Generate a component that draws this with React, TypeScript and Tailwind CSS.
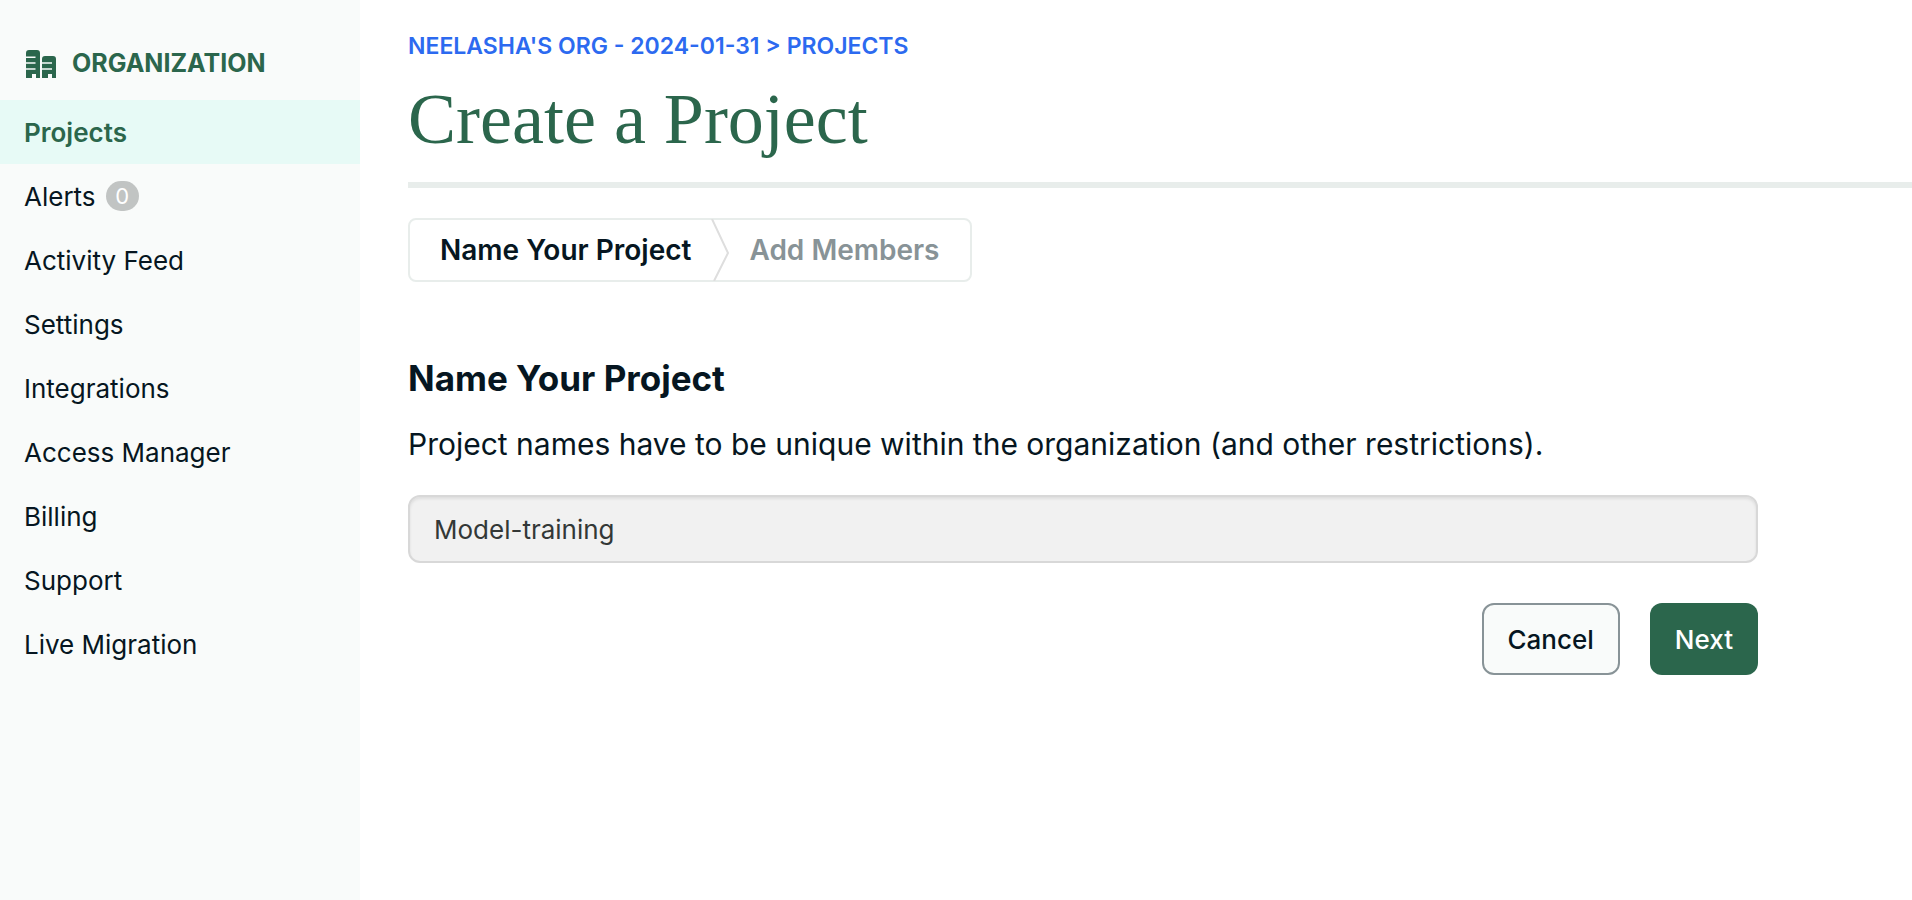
const navItems = [
  { label: "Projects", active: true },
  { label: "Alerts", count: 0 },
  { label: "Activity Feed" },
  { label: "Settings" },
  { label: "Integrations" },
  { label: "Access Manager" },
  { label: "Billing" },
  { label: "Support" },
  { label: "Live Migration" },
];

function BuildingIcon() {
  return (
    <svg className="h-7 w-[30px] shrink-0" viewBox="0 0 30 28" fill="currentColor" aria-hidden="true">
      <path d="M0 28V3Q0 0 3 0H11Q14 0 14 3V28H10V24H6V28Z" />
      <path d="M16 28V9Q16 6 19 6H27Q30 6 30 9V28H26V24H22V28Z" />
      <path
        d="M0 6.500H9.500V8H0ZM0 12.300H9.500V13.800H0ZM0 18.200H9.500V19.800H0ZM16 12.300H26V13.800H16ZM16 18.200H26V19.800H16Z"
        fill="#f9fbfa"
      />
    </svg>
  );
}

function Sidebar() {
  return (
    <aside className="w-[360px] shrink-0 bg-[#f9fbfa] pt-7">
      <h2 className="flex h-[72px] items-center gap-4 px-[26px] text-[25px] font-bold text-[#2b664c]">
        <BuildingIcon />
        ORGANIZATION
      </h2>
      <nav aria-label="Organization">
        <ul>
          {navItems.map((item) => (
            <li key={item.label}>
              <a
                href="#"
                aria-current={item.active ? "page" : undefined}
                className={
                  item.active
                    ? "flex h-16 items-center bg-[#e7faf6] px-6 text-[26px] font-semibold text-[#2b664c]"
                    : "flex h-16 items-center gap-[10px] px-6 text-[26px] text-[#061621]"
                }
              >
                {item.label}
                {item.count !== undefined && (
                  <span className="flex h-[30px] w-[33px] items-center justify-center rounded-full bg-[#c1c4c3] text-[22px] text-white">
                    {item.count}
                  </span>
                )}
              </a>
            </li>
          ))}
        </ul>
      </nav>
    </aside>
  );
}

function Steps() {
  return (
    <ol className="flex h-16 w-fit items-stretch rounded-lg border-2 border-[#e8edeb] text-[28px] font-semibold">
      <li aria-current="step" className="flex items-center pl-[30px] text-[#061621]">
        Name Your Project
      </li>
      <li className="flex items-center pr-[30px] text-[#889397]">
        <svg className="mx-5 h-[62px] w-[18px] shrink-0" viewBox="0 0 18 62" fill="none" aria-hidden="true">
          <path d="M1 0L17 34L3 62" stroke="#dedede" strokeWidth="2" />
        </svg>
        Add Members
      </li>
    </ol>
  );
}

export default function App() {
  return (
    <div className="flex min-h-screen bg-white font-['Inter','Liberation_Sans',sans-serif] text-[#061621]">
      <Sidebar />
      <main className="min-w-0 grow pt-7 pl-12">
        <header className="border-b-6 border-[#e8edeb] pb-5">
          <a href="#" className="block w-fit text-[23px] leading-9 font-semibold text-[#2c6af0]">
            NEELASHA'S ORG - 2024-01-31 &gt; PROJECTS
          </a>
          <h1 className="pt-3 font-['Liberation_Serif',serif] text-[72px] leading-[86px] text-[#2b664c]">
            Create a Project
          </h1>
        </header>
        <div className="max-w-[1504px] pt-[30px] pr-[154px]">
          <Steps />
          <form className="pt-[72px]" onSubmit={(event) => event.preventDefault()}>
            <h2 className="text-[35px] leading-12 font-bold">Name Your Project</h2>
            <label htmlFor="project-name" className="block pt-[18px] text-[30px] leading-12">
              Project names have to be unique within the organization (and other restrictions).
            </label>
            <input
              id="project-name"
              type="text"
              defaultValue="Model-training"
              className="mt-[27px] h-[68px] w-full rounded-xl border-2 border-[#d8d8d8] bg-[#f1f1f1] px-6 text-[26px] text-[#333837] shadow-[inset_0_2px_3px_rgba(0,0,0,0.08)]"
            />
            <div className="flex justify-end gap-[30px] pt-10 text-[26px] font-medium">
              <button type="button" className="h-[72px] rounded-xl border-2 border-[#889397] bg-[#f9fbfa] px-6">
                Cancel
              </button>
              <button type="submit" className="h-[72px] rounded-xl bg-[#2b664c] px-[25px] text-white">
                Next
              </button>
            </div>
          </form>
        </div>
      </main>
    </div>
  );
}
